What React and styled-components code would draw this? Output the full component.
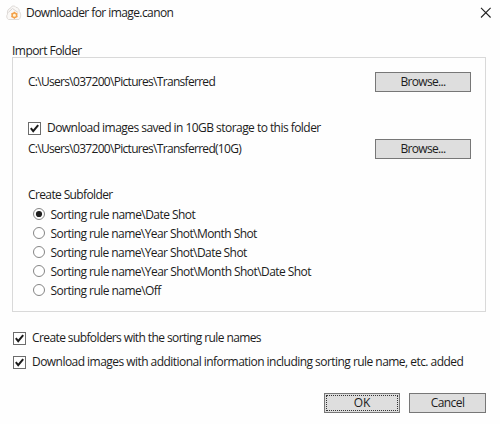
import React from "react";
import styled, { createGlobalStyle } from "styled-components";

const GlobalStyle = createGlobalStyle`
  * { box-sizing: border-box; }
  html, body { margin: 0; background: #fefefe; }
`;

const Dialog = styled.main`
  width: 500px;
  height: 424px;
  display: flex;
  flex-direction: column;
  background: #fefefe;
  color: #1c1c1c;
  font: 12px/16px "Open Sans", "Noto Sans", sans-serif;
  overflow: hidden;
`;

const TitleBar = styled.header`
  height: 43px;
  padding: 5px 8px 0 6px;
  display: flex;
  align-items: flex-start;
`;

const AppIcon = styled.svg`
  width: 16px;
  height: 16px;
  margin: 0 4px 0 0;
`;

const CloseButton = styled.button`
  margin: 2px 0 0 auto;
  padding: 0;
  width: 12px;
  height: 12px;
  border: 0;
  background: none;
  svg { display: block; }
`;

const Text = styled.span`
  white-space: nowrap;
  letter-spacing: ${(p) => p.$track || 0}px;
`;

const GroupLabel = styled.div`
  height: 14px;
  padding-left: 12px;
`;

const Group = styled.section`
  width: 474px;
  height: 255px;
  margin-left: 12px;
  padding: 14px 14px 0 15px;
  border: 1px solid #d9d9d9;
`;

const FolderRow = styled.div`
  height: 20px;
  display: flex;
  justify-content: space-between;
  align-items: center;
`;

const Button = styled.button`
  width: ${(p) => p.$width}px;
  height: 20px;
  padding: 0;
  display: flex;
  align-items: center;
  justify-content: center;
  border: 1px solid #777;
  background: #dedede;
  color: inherit;
  font: inherit;
  outline: ${(p) => (p.$focused ? "1px dotted #333" : "none")};
  outline-offset: -3px;
`;

const CheckRow = styled.label`
  height: 16px;
  margin: ${(p) => p.$margin || 0};
  display: flex;
  align-items: center;
  gap: 6px;
`;

const CheckBox = styled.svg`
  width: 13px;
  height: 13px;
  flex: none;
`;

const Subheading = styled.h2`
  margin: 28px 0 2px;
  height: 16px;
  font: inherit;
`;

const RadioRow = styled.label`
  height: 19px;
  padding-left: 5px;
  display: flex;
  align-items: center;
  gap: 4.5px;
`;

const RadioMark = styled.svg`
  width: 13px;
  height: 13px;
  flex: none;
`;

const Footer = styled.footer`
  margin-top: 23px;
  padding-right: 14px;
  display: flex;
  justify-content: flex-end;
  gap: 9px;
`;

function Check({ label, track, margin }) {
  return (
    <CheckRow $margin={margin}>
      <CheckBox viewBox="0 0 13 13">
        <rect x=".5" y=".5" width="12" height="12" fill="#fff" stroke="#6c6c6c" />
        <path d="M2.8 6.2 5.2 9.1 10.2 3.1" fill="none" stroke="#1b1b1b" strokeWidth="2" />
      </CheckBox>
      <Text $track={track}>{label}</Text>
    </CheckRow>
  );
}

function Radio({ label, track, selected }) {
  return (
    <RadioRow>
      <RadioMark viewBox="0 0 13 13">
        <circle cx="6" cy="6" r="5.5" fill="#fff" stroke="#777" strokeWidth=".9" />
        {selected && <circle cx="6" cy="6" r="3.1" fill="#202020" />}
      </RadioMark>
      <Text $track={track}>{label}</Text>
    </RadioRow>
  );
}

const rules = [
  { label: "Sorting rule name\\Date Shot", track: -0.54, selected: true },
  { label: "Sorting rule name\\Year Shot\\Month Shot", track: -0.57 },
  { label: "Sorting rule name\\Year Shot\\Date Shot", track: -0.57 },
  { label: "Sorting rule name\\Year Shot\\Month Shot\\Date Shot", track: -0.56 },
  { label: "Sorting rule name\\Off", track: -0.55 },
];

export default function App() {
  return (
    <Dialog>
      <GlobalStyle />
      <TitleBar>
        <AppIcon viewBox="0 0 16 16">
          <path d="M2.5 14.5C.4 13.5.3 10.5 1.5 9.2 1 6 2.2 3.5 4.6 3.2 5 .8 8.5.2 10 2.3c2.3.3 3.6 2.2 3.2 4.2 2.2 2 1.8 6-.2 8z" fill="#faf8f6" stroke="#dedad7" />
          <path d="M2.4 7.4 6.5 3.5l5.6 4" fill="none" stroke="#d8d4d2" />
          <circle cx="8.4" cy="10.2" r="2.3" fill="#fff4d8" stroke="#f3a04a" strokeWidth="1.5" />
          <path d="M8.4 6.7v1.2M8.4 12.5v1.2M5.4 8.5l1 .6M10.4 11.3l1 .6M5.4 11.9l1-.6M10.4 9.1l1-.6" stroke="#f3a04a" strokeWidth="1.3" />
        </AppIcon>
        <Text $track={-0.58}>Downloader for image.canon</Text>
        <CloseButton aria-label="Close">
          <svg width="12" height="12" viewBox="0 0 12 12">
            <path d="M1 .9 10.6 10.5M10.6.9 1 10.5" stroke="#222" strokeWidth="1.1" />
          </svg>
        </CloseButton>
      </TitleBar>
      <GroupLabel><Text $track={-0.54}>Import Folder</Text></GroupLabel>
      <Group>
        <FolderRow>
          <Text $track={-0.7}>C:\Users\037200\Pictures\Transferred</Text>
          <Button $width={96}><Text $track={-0.69}>Browse...</Text></Button>
        </FolderRow>
        <Check track={-0.54} margin="28px 0 3px" label="Download images saved in 10GB storage to this folder" />
        <FolderRow>
          <Text $track={-0.7}>C:\Users\037200\Pictures\Transferred(10G)</Text>
          <Button $width={96}><Text $track={-0.69}>Browse...</Text></Button>
        </FolderRow>
        <Subheading><Text $track={-0.62}>Create Subfolder</Text></Subheading>
        {rules.map((rule) => <Radio key={rule.label} {...rule} />)}
      </Group>
      <Check track={-0.6} margin="18px 0 0 13px" label="Create subfolders with the sorting rule names" />
      <Check track={-0.54} margin="8px 0 0 13px" label="Download images with additional information including sorting rule name, etc. added" />
      <Footer>
        <Button $width={76} $focused><Text $track={-0.2}>OK</Text></Button>
        <Button $width={77}><Text $track={-0.57}>Cancel</Text></Button>
      </Footer>
    </Dialog>
  );
}
